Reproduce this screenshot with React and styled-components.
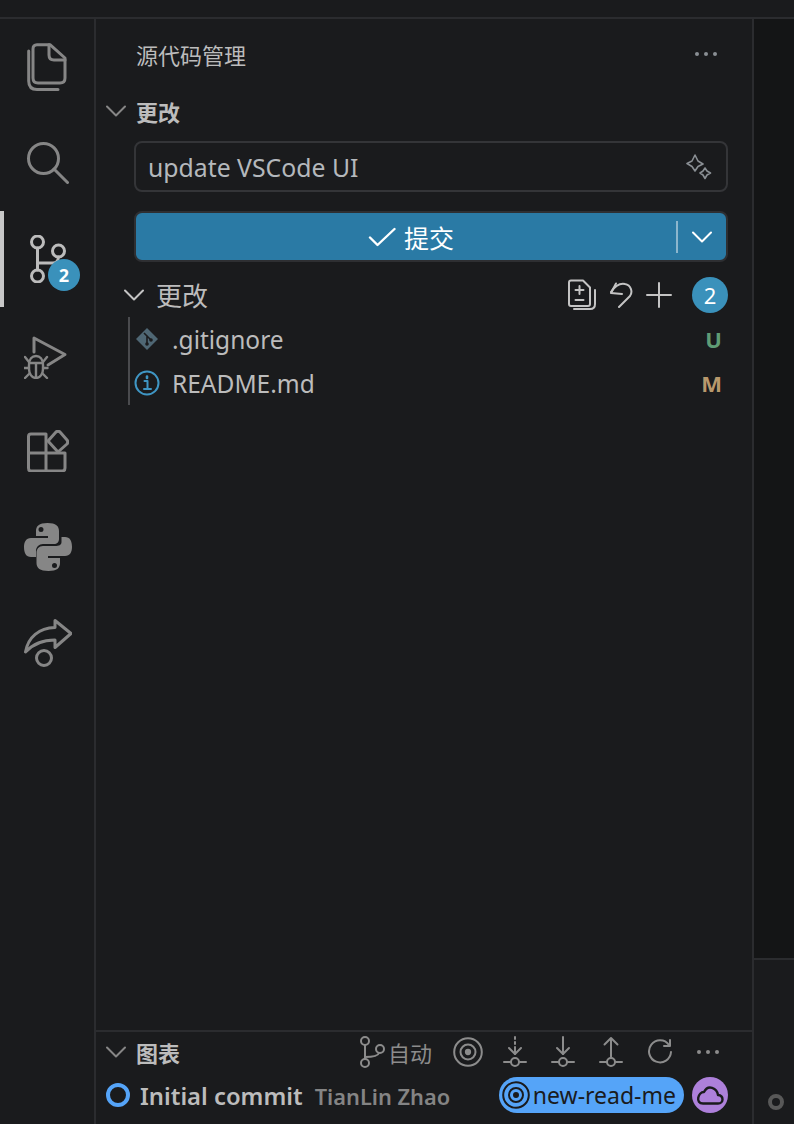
import React from "react";
import styled, { createGlobalStyle } from "styled-components";

const Global = createGlobalStyle`
  html, body {
    margin: 0;
    padding: 0;
    background: #1a1b1d;
  }
  * {
    box-sizing: border-box;
  }
`;

const Window = styled.div`
  width: 794px;
  height: 1124px;
  overflow: hidden;
  display: flex;
  flex-direction: column;
  background: #1a1b1d;
  font-family: "Noto Sans", "Noto Sans CJK SC", sans-serif;
`;

const TitleBar = styled.div`
  height: 19px;
  flex: none;
  background: #1a1b1d;
  border-bottom: 2px solid #2b2c2f;
`;

const Body = styled.div`
  flex: 1;
  min-height: 0;
  display: flex;
`;

const ActivityBar = styled.div`
  width: 96px;
  flex: none;
  border-right: 2px solid #2b2c2f;
  display: flex;
  flex-direction: column;
`;

const ActivityItem = styled.div`
  position: relative;
  height: 96px;
  flex: none;
  display: flex;
  align-items: center;
  justify-content: center;
  color: ${(p) => (p.$active ? "#bcbcbc" : "#868686")};
  border-left: 4px solid ${(p) => (p.$active ? "#c8c8c8" : "transparent")};
  padding-right: 2px;
`;

const ActivityBadge = styled.span`
  position: absolute;
  left: 44px;
  top: 48px;
  width: 32px;
  height: 32px;
  border-radius: 50%;
  background: #3a91bb;
  color: #fff;
  font-size: 18px;
  font-weight: 700;
  display: flex;
  align-items: center;
  justify-content: center;
`;

const SideBar = styled.div`
  width: 658px;
  flex: none;
  border-right: 2px solid #2b2c2f;
  display: flex;
  flex-direction: column;
`;

const SideHeader = styled.div`
  height: 70px;
  flex: none;
  padding: 0 35px 0 40px;
  display: flex;
  align-items: center;
  justify-content: space-between;
  color: #bcbcbc;
  font-size: 22px;
`;

const Dots = styled.span`
  display: flex;
  gap: 5px;
  color: ${(p) => p.$color || "#8a8f94"};
  i {
    width: 4px;
    height: 4px;
    border-radius: 50%;
    background: currentColor;
  }
`;

const SectionHead = styled.div`
  height: ${(p) => p.$h || 44}px;
  flex: none;
  display: flex;
  align-items: center;
  padding-left: 10px;
  color: #bcbcbc;
  font-size: 22px;
  font-weight: 700;
  svg {
    margin-right: 10px;
    color: #868686;
  }
`;

const Content = styled.div`
  flex: 1;
  min-height: 0;
  padding: 8px 24px 0 38px;
  display: flex;
  flex-direction: column;
`;

const CommitInput = styled.div`
  height: 51px;
  flex: none;
  border: 2px solid #343538;
  border-radius: 8px;
  padding: 0 14px 0 12px;
  display: flex;
  align-items: center;
  justify-content: space-between;
  color: #b4b8bc;
  font-size: 24.8px;
`;

const CommitButton = styled.div`
  height: 51px;
  flex: none;
  margin-top: 19px;
  border: 2px solid #2e2f32;
  border-radius: 8px;
  background: #2a7aa5;
  color: #fff;
  font-size: 25px;
  display: flex;
  align-items: center;
`;

const CommitLabel = styled.div`
  flex: 1;
  display: flex;
  align-items: center;
  justify-content: center;
  gap: 8px;
  padding-left: 10px;
`;

const ButtonSplit = styled.div`
  width: 50px;
  height: 32px;
  flex: none;
  border-left: 2px solid #8cb6cd;
  display: flex;
  align-items: center;
  justify-content: center;
`;

const ChangesHead = styled.div`
  height: 44px;
  flex: none;
  margin-top: 11px;
  margin-left: -10px;
  display: flex;
  align-items: center;
  color: #bcbcbc;
  font-size: 26px;
  svg.chev {
    margin-right: 12px;
    color: #c4c4c4;
  }
`;

const RowTools = styled.div`
  margin-left: auto;
  display: flex;
  align-items: center;
  color: #c4c4c4;
  gap: 13px;
`;

const CountBadge = styled.span`
  width: 36px;
  height: 36px;
  margin-left: 7px;
  border-radius: 50%;
  background: #3a91bb;
  color: #fff;
  font-size: 22px;
  display: flex;
  align-items: center;
  justify-content: center;
`;

const FileList = styled.div`
  margin-left: -6px;
  border-left: 2px solid #4a4b4e;
  height: 88px;
`;

const FileRow = styled.div`
  height: 44px;
  display: flex;
  align-items: center;
  padding: 0 6px 0 4px;
  color: #bcbcbc;
  font-size: 24.5px;
`;

const FileIcon = styled.span`
  width: 26px;
  flex: none;
  margin-right: 12px;
  display: flex;
  align-items: center;
  justify-content: center;
`;

const Status = styled.span`
  margin-left: auto;
  font-size: 22px;
  font-weight: 700;
  color: ${(p) => p.$color};
`;

const GraphPanel = styled.div`
  height: 94px;
  flex: none;
  border-top: 2px solid #2b2c2f;
  display: flex;
  flex-direction: column;
`;

const GraphHead = styled.div`
  height: 40px;
  flex: none;
  display: flex;
  align-items: center;
  padding-right: 33px;
`;

const GraphTools = styled.div`
  margin-left: auto;
  display: flex;
  align-items: center;
  gap: 24px;
  color: #8c8c8c;
`;

const AutoLabel = styled.span`
  display: flex;
  align-items: center;
  gap: 3px;
  font-size: 22px;
  margin-right: -3px;
`;

const TargetSlot = styled.span`
  display: flex;
  margin-right: -4px;
`;

const CommitRow = styled.div`
  height: 46px;
  flex: none;
  display: flex;
  align-items: center;
  padding: 0 24px 0 10px;
`;

const CommitDot = styled.span`
  width: 24px;
  height: 24px;
  flex: none;
  border: 4px solid #55a4f8;
  border-radius: 50%;
`;

const CommitTitle = styled.span`
  margin-left: 10px;
  padding-top: 2px;
  color: #bcbcbc;
  font-size: 23.8px;
  font-weight: 600;
`;

const CommitAuthor = styled.span`
  margin-left: 12px;
  padding-top: 2px;
  color: #848484;
  font-size: 21.8px;
  font-weight: 600;
`;

const BranchPill = styled.span`
  margin-left: auto;
  height: 36px;
  border-radius: 18px;
  background: #55a4f8;
  color: #1a1b1d;
  font-size: 23px;
  display: flex;
  align-items: center;
  gap: 3px;
  padding: 0 8px 0 3px;
`;

const CloudPill = styled.span`
  width: 36px;
  height: 36px;
  margin-left: 8px;
  border-radius: 50%;
  background: #ad80da;
  color: #1a1b1d;
  display: flex;
  align-items: center;
  justify-content: center;
`;

const RightRail = styled.div`
  flex: 1;
  display: flex;
  flex-direction: column;
`;

const EditorArea = styled.div`
  height: 941px;
  flex: none;
  background: #141516;
  border-bottom: 2px solid #2b2c2f;
`;

const RailBottom = styled.div`
  flex: 1;
  padding: 0 0 14px 14px;
  display: flex;
  align-items: flex-end;
`;

const RailDot = styled.span`
  width: 16px;
  height: 16px;
  border: 4px solid #585858;
  border-radius: 50%;
`;

const Svg = ({ size = 24, w, h, sw = 1.5, children, ...rest }) => (
  <svg
    width={w || size}
    height={h || size}
    viewBox={`0 0 ${w || size} ${h || size}`}
    fill="none"
    stroke="currentColor"
    strokeWidth={sw}
    strokeLinecap="round"
    strokeLinejoin="round"
    {...rest}
  >
    {children}
  </svg>
);

const Chevron = ({ className }) => (
  <Svg w={20} h={12} className={className} sw={2}>
    <path d="M1 1.5 L10 10.5 L19 1.5" />
  </Svg>
);

const FilesIcon = () => (
  <Svg w={42} h={48} sw={3}>
    <path d="M10 1.7 H23 L38 15 V35 Q38 40 33 40 H11 Q6 40 6 35 V6 Q6 1.7 10 1.7 Z" />
    <path d="M22 1.7 V12 Q22 17 27 17 H38" />
    <path d="M1.7 8 V38 Q1.7 46.5 10 46.5 H31" />
  </Svg>
);

const SearchIcon = () => (
  <Svg w={42} h={42} sw={3}>
    <circle cx="16.5" cy="16.5" r="15" />
    <path d="M27 27 L40.5 40.5" />
  </Svg>
);

const BranchIcon = () => (
  <Svg w={36} h={48} sw={3}>
    <circle cx="7.5" cy="7" r="6" />
    <circle cx="7.5" cy="41" r="6" />
    <circle cx="28.5" cy="16" r="6" />
    <path d="M7.5 13 V35" />
    <path d="M7.5 28 H23 Q28 28 28.5 22" />
  </Svg>
);

const DebugIcon = () => (
  <Svg w={48} h={48} sw={2.4}>
    <path d="M10 21 V7 L41 23.5 L24 34" strokeWidth="3" />
    <path d="M5 34 C5 28 8 25 12 25 C16 25 19 28 19 34 V38 C19 43 16 47 12 47 C8 47 5 43 5 38 Z" fill="#1a1b1d" />
    <path d="M5 32 H19 M12 33 V47 M1 26 L5 31 M23 26 L19 31 M0.5 37 H5 M19 37 H23.5 M1 47 L5 43 M23 47 L19 43" />
  </Svg>
);

const ExtensionsIcon = () => (
  <Svg w={42} h={42} sw={3}>
    <path d="M19 23 V4 H4 Q1.5 4 1.5 6.5 V38 Q1.5 41 4 41 H35 Q38 41 38 38 V23 H1.5" />
    <path d="M19 23 V41" />
    <path d="M21 11 L29 2 Q31 0.5 33 2 L40 10 Q41.5 12 40 14 L31 22 Z" />
  </Svg>
);

const PythonIcon = () => (
  <svg width="48" height="48" viewBox="0 0 48 48" fill="currentColor">
    <path d="M23.5 0 C15 0 12 3 12 8 V13 H24 V15 H7 C2 15 0 19 0 24 C0 30 2 34 7 34 H12 V28 C12 24 15 21 19 21 H30 C33 21 35 19 35 16 V8 C35 3 32 0 23.5 0 Z M17 4 A2.5 2.5 0 1 1 17 9 A2.5 2.5 0 1 1 17 4 Z" fillRule="evenodd" />
    <path d="M24.5 48 C33 48 36 45 36 40 V35 H24 V33 H41 C46 33 48 29 48 24 C48 18 46 14 41 14 H37.5 V19 C37.5 22 35 23 31 23 H19 C15 23 12.5 26 12.5 30 V40 C12.5 45 16 48 24.5 48 Z M30.5 40 A2.5 2.5 0 1 1 30.5 45 A2.5 2.5 0 1 1 30.5 40 Z" fillRule="evenodd" />
  </svg>
);

const ShareIcon = () => (
  <Svg w={48} h={48} sw={3}>
    <path d="M31 1.5 L47 14.5 L31 28.5 V21 C20 21 9 25 1.5 33 C4 18 15 9 31 8.5 Z" />
    <circle cx="20" cy="39" r="7.5" />
  </Svg>
);

const SparkleIcon = () => (
  <Svg w={26} h={26} sw={1.6} style={{ color: "#8a8f94" }}>
    <path d="M9 1 L12 7 L17 10 L12 12.5 L9 17 L6 12.5 L1 9.5 L6 7 Z" />
    <path d="M19 14 L21 17 L24.5 19 L21 21 L19 24.5 L17 21 L14 19 L17 17 Z" />
  </Svg>
);

const CheckIcon = () => (
  <Svg w={28} h={20} sw={2.4}>
    <path d="M2 10.5 L9.5 18 L26.5 2" />
  </Svg>
);

const StageAllIcon = () => (
  <Svg w={28} h={32} sw={2}>
    <path d="M3 1.5 H15 L22 8.5 V25 Q22 27 20 27 H3 Q1 27 1 25 V3.5 Q1 1.5 3 1.5 Z" />
    <path d="M11.5 7 V15 M7.5 11 H15.5 M7.5 21 H15.5" />
    <path d="M6 30 H22 Q27 30 27 25 V11" />
  </Svg>
);

const DiscardIcon = () => (
  <Svg w={24} h={28} sw={2}>
    <path d="M7 2.5 L2 12 L13 13" />
    <path d="M2 11 C6 5 11 2 16 3 C22 4 24 11 21 15 L10 26" />
  </Svg>
);

const PlusIcon = () => (
  <Svg w={26} h={26} sw={2}>
    <path d="M13 1 V25 M1 13 H25" />
  </Svg>
);

const GitIcon = () => (
  <svg width="22" height="22" viewBox="0 0 22 22">
    <path d="M11 0 L22 11 L11 22 L0 11 Z" fill="#4f6774" />
    <path d="M8 5 L11 8 L11 16 M11 8 L15 12" stroke="#1a1b1d" strokeWidth="1.6" fill="none" />
    <circle cx="11" cy="16" r="1.8" fill="#1a1b1d" />
    <circle cx="15" cy="12" r="1.8" fill="#1a1b1d" />
  </svg>
);

const InfoIcon = () => (
  <Svg w={26} h={26} sw={2} style={{ color: "#3f96c4" }}>
    <circle cx="13" cy="13" r="11.5" />
    <path d="M10.5 11 H13.5 V19 M10 19 H17" />
    <path d="M13 6.5 V8" strokeWidth="2.6" />
  </Svg>
);

const TargetIcon = ({ size = 30, sw = 2 }) => (
  <Svg size={size} sw={sw}>
    <circle cx={size / 2} cy={size / 2} r={size / 2 - 1.2} />
    <circle cx={size / 2} cy={size / 2} r={size / 4} />
    <circle cx={size / 2} cy={size / 2} r={size / 14} fill="currentColor" />
  </Svg>
);

const SmallBranchIcon = () => (
  <Svg w={26} h={32} sw={2}>
    <circle cx="6" cy="5" r="4" />
    <circle cx="6" cy="27" r="4" />
    <circle cx="21" cy="13" r="4" />
    <path d="M6 9 V23" />
    <path d="M6 21 C14 21 19 20 20 17" />
  </Svg>
);

const FetchIcon = ({ dashed, up }) => (
  <Svg w={24} h={32} sw={2}>
    {up ? (
      <path d="M12 2 V21 M5.5 8.5 L12 2 L18.5 8.5" />
    ) : (
      <>
        <path d={dashed ? "M12 1 V3 M12 6 V8 M12 11 V18" : "M12 1 V18"} />
        <path d="M6 12 L12 18 L18 12" />
      </>
    )}
    <circle cx="12" cy="26" r="4" />
    <path d="M1 26 H8 M16 26 H23" />
  </Svg>
);

const RefreshIcon = () => (
  <Svg w={26} h={26} sw={2}>
    <path d="M22 6 A11 11 0 1 0 24 13" />
    <path d="M23 1 V7 H17" />
  </Svg>
);

const CloudIcon = () => (
  <Svg w={28} h={22} sw={2.4}>
    <path d="M7 19.5 H22 C28 19.5 28 11.5 22 11 C21 4 12 0 8 8 C2 8 -1 19.5 7 19.5 Z" />
  </Svg>
);

const App = () => (
  <Window>
    <Global />
    <TitleBar />
    <Body>
      <ActivityBar>
        <ActivityItem><FilesIcon /></ActivityItem>
        <ActivityItem><SearchIcon /></ActivityItem>
        <ActivityItem $active>
          <BranchIcon />
          <ActivityBadge>2</ActivityBadge>
        </ActivityItem>
        <ActivityItem><DebugIcon /></ActivityItem>
        <ActivityItem><ExtensionsIcon /></ActivityItem>
        <ActivityItem><PythonIcon /></ActivityItem>
        <ActivityItem><ShareIcon /></ActivityItem>
      </ActivityBar>

      <SideBar>
        <SideHeader>
          <span>源代码管理</span>
          <Dots><i /><i /><i /></Dots>
        </SideHeader>
        <SectionHead>
          <Chevron />
          更改
        </SectionHead>
        <Content>
          <CommitInput>
            <span>update VSCode UI</span>
            <SparkleIcon />
          </CommitInput>
          <CommitButton>
            <CommitLabel>
              <CheckIcon />
              提交
            </CommitLabel>
            <ButtonSplit>
              <Chevron />
            </ButtonSplit>
          </CommitButton>
          <ChangesHead>
            <Chevron className="chev" />
            更改
            <RowTools>
              <StageAllIcon />
              <DiscardIcon />
              <PlusIcon />
              <CountBadge>2</CountBadge>
            </RowTools>
          </ChangesHead>
          <FileList>
            <FileRow>
              <FileIcon><GitIcon /></FileIcon>
              <span>.gitignore</span>
              <Status $color="#5f9c75">U</Status>
            </FileRow>
            <FileRow>
              <FileIcon><InfoIcon /></FileIcon>
              <span>README.md</span>
              <Status $color="#b8986c">M</Status>
            </FileRow>
          </FileList>
        </Content>
        <GraphPanel>
          <GraphHead>
            <SectionHead $h={40}>
              <Chevron />
              图表
            </SectionHead>
            <GraphTools>
              <AutoLabel>
                <SmallBranchIcon />
                自动
              </AutoLabel>
              <TargetSlot><TargetIcon /></TargetSlot>
              <FetchIcon dashed />
              <FetchIcon />
              <FetchIcon up />
              <RefreshIcon />
              <Dots $color="#8c8c8c"><i /><i /><i /></Dots>
            </GraphTools>
          </GraphHead>
          <CommitRow>
            <CommitDot />
            <CommitTitle>Initial commit</CommitTitle>
            <CommitAuthor>TianLin Zhao</CommitAuthor>
            <BranchPill>
              <TargetIcon size={28} sw={2} />
              new-read-me
            </BranchPill>
            <CloudPill><CloudIcon /></CloudPill>
          </CommitRow>
        </GraphPanel>
      </SideBar>

      <RightRail>
        <EditorArea />
        <RailBottom><RailDot /></RailBottom>
      </RightRail>
    </Body>
  </Window>
);

export default App;
